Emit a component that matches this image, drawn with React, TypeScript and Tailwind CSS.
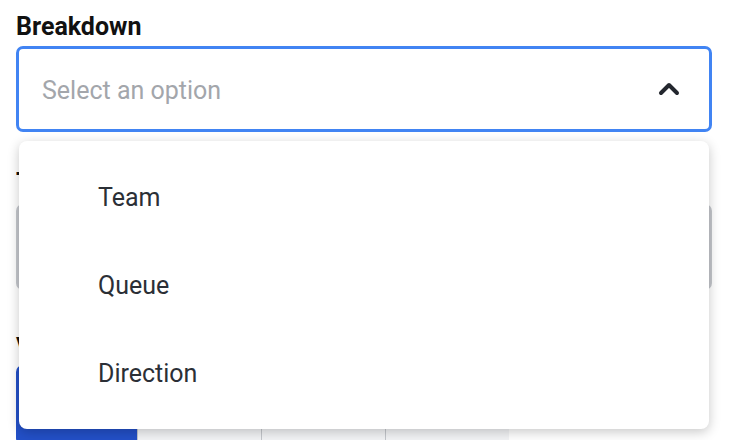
import { ChevronUp } from "lucide-react";

const options = ["Team", "Queue", "Direction"];
const segments = ["Day", "Week", "Month", "Year"];

export default function App() {
  return (
    <div className="relative h-[440px] w-[732px] overflow-hidden bg-white font-['Roboto',sans-serif]">
      <div className="flex flex-col pl-4 pr-5 pt-[9px]">
        <label className="text-[25px] font-bold leading-[35px] text-[#111]">Breakdown</label>
        <div className="mt-[2px] flex h-[86px] items-center justify-between rounded-[7px] border-[3px] border-[#4184f3] pl-[23px] pr-[24px]">
          <span className="pt-[4px] text-[25px] text-[#a3a6ab]">Select an option</span>
          <ChevronUp size={32} strokeWidth={3} className="text-[#23272e]" />
        </div>

        <label className="mt-[33px] text-[25px] font-bold leading-[35px] text-[#111]">Time zone</label>
        <div className="mt-[4px] h-[86px] rounded-[7px] border-[3px] border-[#c4c7cc]" />

        <label className="mt-[40px] text-[25px] font-bold leading-[35px] text-[#111]">View</label>
        <div className="flex h-[80px]">
          {segments.map((s, i) => (
            <div
              key={s}
              className={
                i === 0
                  ? "flex w-[121px] items-center justify-center rounded-l-[7px] bg-[#2350c8] text-white"
                  : "flex w-[124px] items-center justify-center border-l border-[#c4c7cc] bg-[#f3f4f6]"
              }
            >
              {s}
            </div>
          ))}
        </div>
      </div>

      <div className="absolute left-[19px] top-[141px] w-[690px] rounded-lg bg-white py-3 shadow-[0_3px_12px_rgba(0,0,0,0.22)]">
        {options.map((o) => (
          <div key={o} className="flex h-[88px] items-center pl-[79px] pt-[2px] text-[25px] text-[#2b2f36]">
            {o}
          </div>
        ))}
      </div>
    </div>
  );
}
